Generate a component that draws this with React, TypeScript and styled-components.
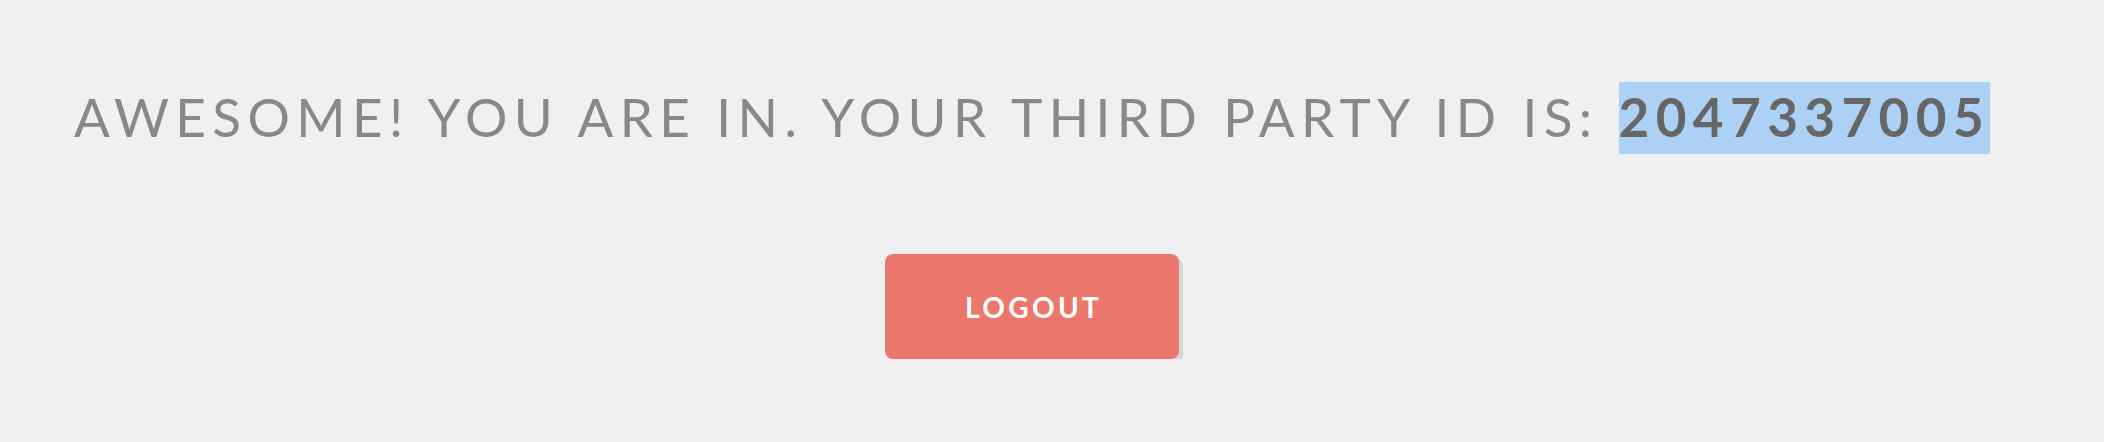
import React from "react";
import styled, { createGlobalStyle } from "styled-components";

const GlobalStyle = createGlobalStyle`
  html, body {
    margin: 0;
    padding: 0;
    background: #f0f0f0;
  }
  body {
    font-family: "Lato", "Noto Sans", sans-serif;
  }
`;

const Page = styled.main`
  display: flex;
  flex-direction: column;
  align-items: center;
  box-sizing: border-box;
  width: 100%;
  padding: 81px 40px 0 0;
`;

const Heading = styled.h1`
  margin: 0;
  font-family: "Lato", "Noto Sans", sans-serif;
  font-weight: 400;
  font-size: 53px;
  line-height: 72px;
  letter-spacing: 0.121em;
  text-transform: uppercase;
  color: #888888;
  white-space: nowrap;
  text-align: center;
`;

const PartyId = styled.span`
  font-weight: 700;
  color: #666666;
  background: #acd1f5;
  padding: 3px 0 6px;
`;

const LogoutButton = styled.button`
  margin-top: 101px;
  width: 294px;
  height: 105px;
  display: flex;
  align-items: center;
  justify-content: center;
  border: none;
  border-radius: 8px;
  background: #ec776d;
  box-shadow: 4px 4px 0 #d6d6d6;
  color: #ffffff;
  font-family: "Lato", "Noto Sans", sans-serif;
  font-weight: 700;
  font-size: 28px;
  letter-spacing: 0.12em;
  text-transform: uppercase;
  cursor: pointer;
  padding: 0 0 0 0.12em;
`;

export default function App() {
  return (
    <>
      <GlobalStyle />
      <Page>
        <Heading>
          Awesome! You are in. Your third party ID is: <PartyId>2047337005</PartyId>
        </Heading>
        <LogoutButton type="button">Logout</LogoutButton>
      </Page>
    </>
  );
}
